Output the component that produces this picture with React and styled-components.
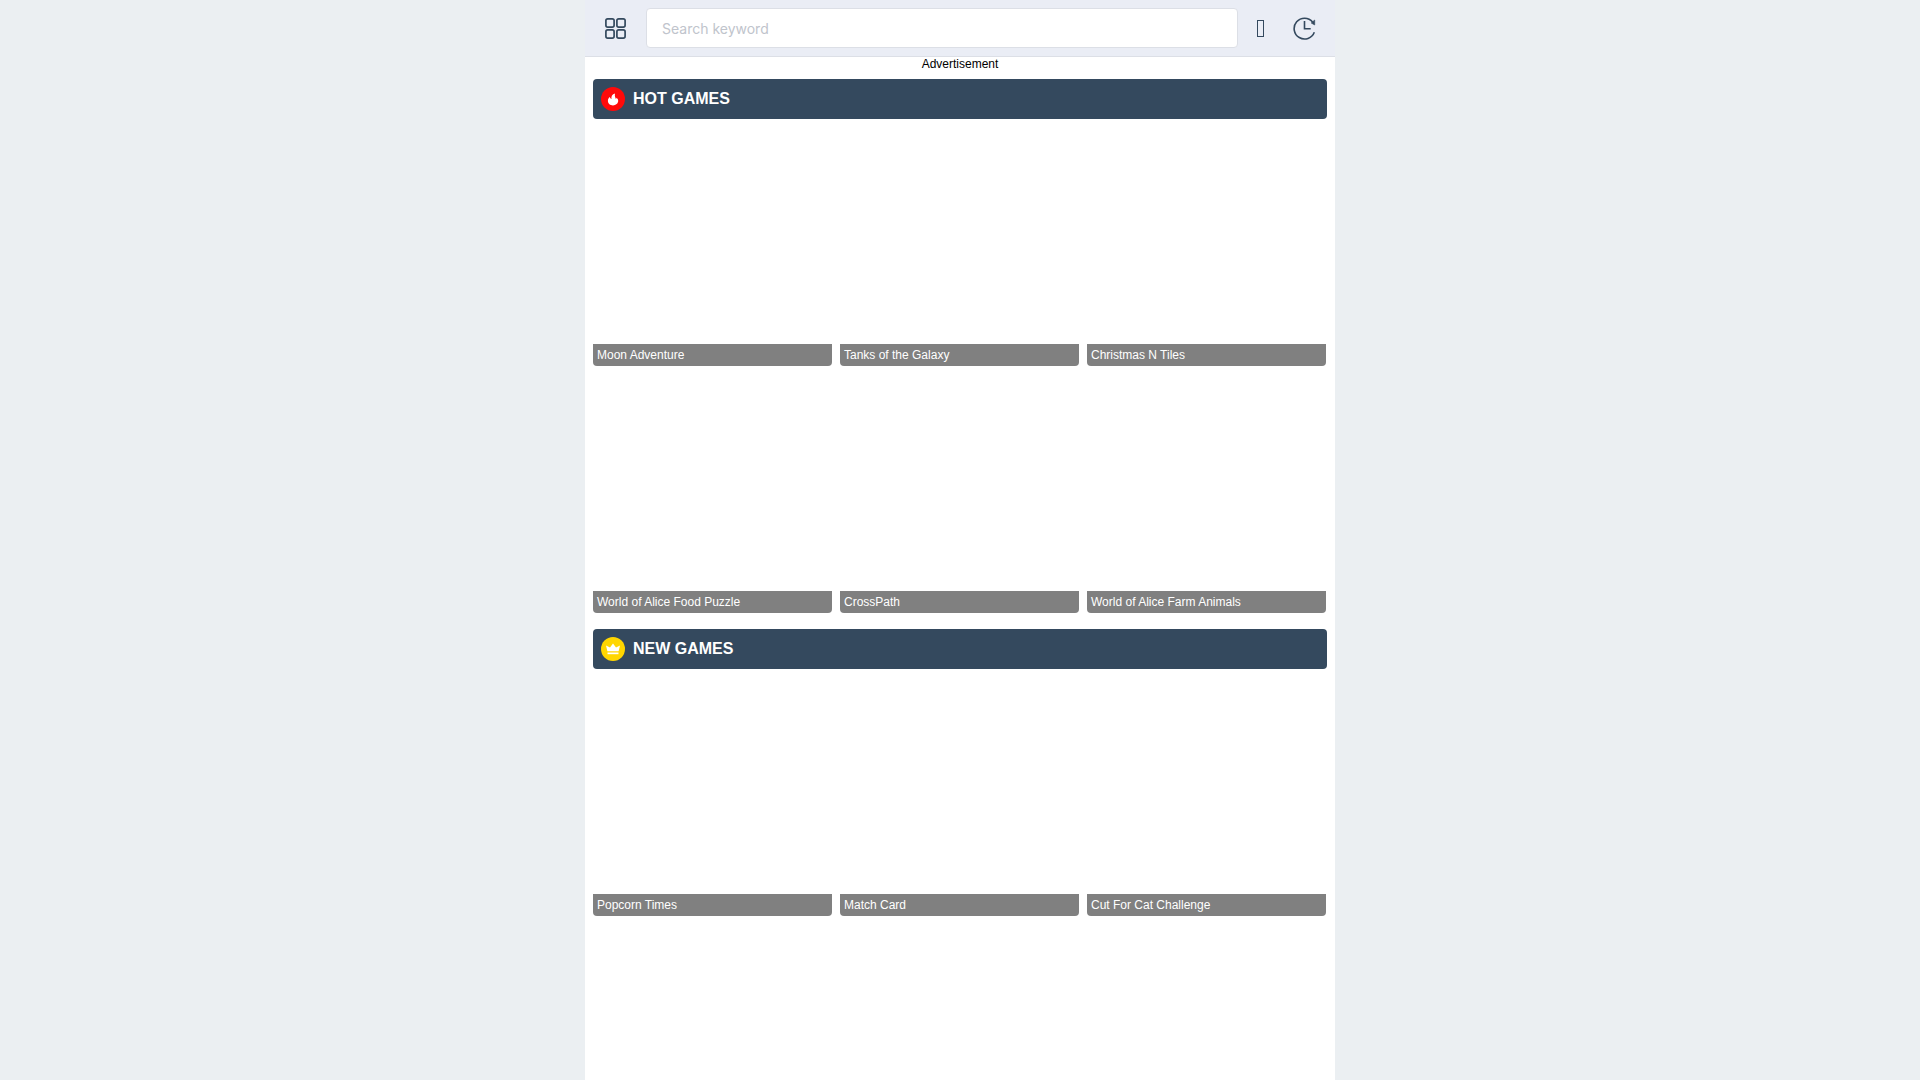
import React from "react";
import styled, { createGlobalStyle } from "styled-components";

const GlobalStyle = createGlobalStyle`
    * {
        box-sizing: border-box;
    }

    body {
        margin: 0;
        background-color: #ebeff2;
        color: #000;
        font-family: Arial, "Liberation Sans", sans-serif;
        font-size: 12px;
        text-rendering: optimizeLegibility;
        overflow: hidden;
    }

    ul {
        list-style: none;
        margin: 0;
        padding: 0;
    }
`

const Page = styled.div`
    max-width: 750px;
    min-height: 100vh;
    margin: 0 auto;
    background-color: #fff;
`

const Header = styled.header`
    display: flex;
    align-items: center;
    gap: 8px;
    padding: 8px;
    background-color: #eaedf5;
    border-bottom: 1px solid #dcdfe6;
`

const IconButton = styled.button`
    flex: none;
    display: flex;
    align-items: center;
    justify-content: center;
    width: ${({ $width }) => $width}px;
    height: 40px;
    padding: 0;
    border: none;
    background: none;
    color: #34495e;
    cursor: pointer;
`

const SearchForm = styled.form`
    flex: 1;
    display: flex;
`

const SearchInput = styled.input`
    width: 100%;
    height: 40px;
    padding: 0 15px;
    border: 1px solid #dcdfe6;
    border-radius: 4px;
    background-color: #fff;
    color: #606266;
    font-family: Inter, sans-serif;
    font-size: 14px;
    outline: none;

    &::placeholder {
        color: #c0c4cc;
    }
`

const Advertisement = styled.div`
    line-height: 14px;
    text-align: center;
`

const Section = styled.section`
    padding: 8px;
`

const SectionTitle = styled.h2`
    display: flex;
    align-items: center;
    gap: 8px;
    height: 40px;
    margin: 0 0 8px;
    padding: 0 8px;
    border-radius: 4px;
    background-color: #34495e;
    color: #fff;
    font-size: 16px;
`

const Badge = styled.span`
    display: flex;
    align-items: center;
    justify-content: center;
    width: 24px;
    height: 24px;
    border-radius: 50%;
    background-color: ${({ $color }) => $color};
`

const GameList = styled.ul`
    display: grid;
    grid-template-columns: repeat(3, 1fr);
    gap: 8px;
    padding-right: 1px;
`

const GameCard = styled.a`
    display: flex;
    align-items: flex-end;
    aspect-ratio: 1;
    border-radius: 4px;
    overflow: hidden;
    text-decoration: none;
`

const GameName = styled.span`
    flex: 1;
    padding: 0 4px;
    background-color: #808080;
    color: #fff;
    line-height: 22px;
`

const GridIcon = () => (
    <svg width="21" height="21" viewBox="0 0 21 21" fill="none" stroke="currentColor" strokeWidth="1.7">
        <rect x="0.9" y="0.9" width="8.200" height="8.200" rx="1.800" />
        <rect x="11.900" y="0.9" width="8.200" height="8.200" rx="1.800" />
        <rect x="0.9" y="11.900" width="8.200" height="8.200" rx="1.800" />
        <rect x="11.900" y="11.900" width="8.200" height="8.200" rx="1.800" />
    </svg>
)

const SearchGlyph = () => (
    <svg width="7" height="17" viewBox="0 0 7 17" fill="none" stroke="currentColor">
        <rect x="0.5" y="0.5" width="6" height="16" />
    </svg>
)

const HistoryIcon = () => (
    <svg width="23" height="23" viewBox="0 0 23 23" fill="none" stroke="currentColor" strokeWidth="1.600">
        <path d="M21.300 15.200A10.400 10.400 0 1 1 19.600 5" />
        <path d="M21.700 3v5l-3.500-2z" fill="currentColor" strokeWidth="0.600" />
        <path d="M11.500 4v7.800h6.200" />
    </svg>
)

const FireIcon = () => (
    <svg width="12" height="13" viewBox="0 0 12 13" fill="#fff">
        <path d="M8 .4C5.200 1.300 4 3.300 4.500 6C3.700 5.700 3.100 5 2.900 3.900C1.500 5 .9 6.200 .9 7.800C.9 10.700 3.200 12.400 6 12.400S11.200 10.500 11.200 7.800C11.200 6.400 10.600 5.600 9.500 4.700C9.500 5.400 9.200 5.800 8.800 6C8.800 4.800 7.300 3.200 8 .4z" />
    </svg>
)

const CrownIcon = () => (
    <svg width="14" height="12" viewBox="0 0 14 12" fill="#fff">
        <path d="M0 2.500L4 4.600L7 .5L10 4.600L14 2.500L12.600 8.300H1.400z" />
        <path d="M1.500 9.500h11v1.700h-11z" />
    </svg>
)

const sections = [
    {
        title: "HOT GAMES",
        color: "#ff0a0a",
        icon: <FireIcon />,
        games: [
            "Moon Adventure",
            "Tanks of the Galaxy",
            "Christmas N Tiles",
            "World of Alice Food Puzzle",
            "CrossPath",
            "World of Alice Farm Animals",
        ],
    },
    {
        title: "NEW GAMES",
        color: "#ffd600",
        icon: <CrownIcon />,
        games: ["Popcorn Times", "Match Card", "Cut For Cat Challenge"],
    },
]

const App = () => {
    const onSubmit = (event) => {
        event.preventDefault()
    }

    return (
        <>
            <GlobalStyle />
            <Page>
                <Header>
                    <IconButton type="button" aria-label="Categories" $width={45}>
                        <GridIcon />
                    </IconButton>
                    <SearchForm id="search" onSubmit={onSubmit}>
                        <SearchInput type="text" placeholder="Search keyword" aria-label="Search keyword" />
                    </SearchForm>
                    <IconButton type="submit" form="search" aria-label="Search" $width={28}>
                        <SearchGlyph />
                    </IconButton>
                    <IconButton type="button" aria-label="History" $width={45}>
                        <HistoryIcon />
                    </IconButton>
                </Header>
                <Advertisement>Advertisement</Advertisement>
                <main>
                    {sections.map(({ title, color, icon, games }) => (
                        <Section key={title}>
                            <SectionTitle>
                                <Badge $color={color}>{icon}</Badge>
                                {title}
                            </SectionTitle>
                            <GameList>
                                {games.map((game) => (
                                    <li key={game}>
                                        <GameCard href="#">
                                            <GameName>{game}</GameName>
                                        </GameCard>
                                    </li>
                                ))}
                            </GameList>
                        </Section>
                    ))}
                </main>
            </Page>
        </>
    )
}

export default App;
